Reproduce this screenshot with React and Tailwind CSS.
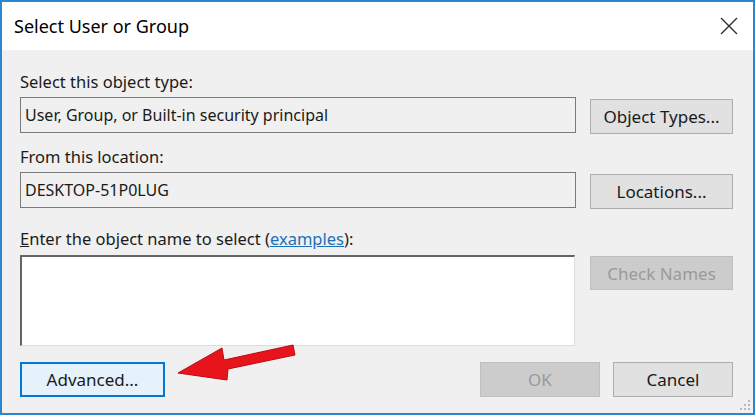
import React from "react";

const font = { fontFamily: '"Noto Sans", "Open Sans", sans-serif' };

const Button = ({ children, variant = "normal", className = "" }) => {
  const styles = {
    normal: "bg-[#e1e1e1] border-[#adadad] text-[#1a1a1a]",
    focused: "bg-[#e5f1fb] border-[#0078d7] border-2 text-[#1a1a1a]",
    disabled: "bg-[#cccccc] border-[#bfbfbf] text-[#9a9a9a]",
  };
  return (
    <div
      className={`flex items-center justify-center border text-[17px] leading-none ${styles[variant]} ${className}`}
    >
      {children}
    </div>
  );
};

const Arrow = () => (
  <svg
    className="absolute left-0 top-0 pointer-events-none"
    width="755"
    height="415"
    viewBox="0 0 755 415"
  >
    <polygon
      points="178,373 222,348 224,360 293,345 295,355 228,369 227,380"
      fill="#e8141c"
      stroke="#b80d12"
      strokeWidth="1"
      strokeLinejoin="round"
    />
  </svg>
);

export default function App() {
  return (
    <div className="relative w-[755px] h-[415px] overflow-hidden" style={font}>
      <div className="w-full h-full flex flex-col border-2 border-[#2a86d2] bg-[#f0f0f0]">
        {/* Title bar */}
        <div className="h-[48px] bg-white flex items-center justify-between pl-[12px] pr-[15px]">
          <span className="text-[18px] text-black pt-[1px]">Select User or Group</span>
          <svg width="18" height="18" viewBox="0 0 18 18">
            <path d="M1 1L17 17M17 1L1 17" stroke="#2b2b2b" strokeWidth="1.3" />
          </svg>
        </div>

        {/* Body */}
        <div className="flex-1 flex flex-col pl-[18px] pr-[20px] pt-[22px] text-[16px] text-[#1a1a1a]">
          <div className="h-[20px] leading-[20px] text-[16.5px]">Select this object type:</div>
          <div className="mt-[5px] flex gap-[14px]">
            <div className="flex-1 h-[36px] border border-[#7a7a7a] bg-[#f0f0f0] flex items-center pl-[4px]">
              User, Group, or Built-in security principal
            </div>
            <Button className="w-[143px] h-[35px] mt-[2px]">Object Types...</Button>
          </div>

          <div className="mt-[13px] h-[20px] leading-[20px] text-[16.5px]">From this location:</div>
          <div className="mt-[5px] flex gap-[14px]">
            <div className="flex-1 h-[36px] border border-[#7a7a7a] bg-[#f0f0f0] flex items-center pl-[4px]">
              DESKTOP-51P0LUG
            </div>
            <Button className="w-[143px] h-[35px] mt-[2px]">Locations...</Button>
          </div>

          <div className="mt-[20px] h-[20px] leading-[20px] text-[16.5px]">
            <span className="underline">E</span>nter the object name to select (
            <span className="text-[#1c6fb8] underline">examples</span>):
          </div>
          <div className="mt-[6px] flex gap-[15px]">
            <div className="flex-1 h-[91px] bg-white border-t-2 border-l-2 border-t-[#646464] border-l-[#646464] border-r border-b border-r-[#dcdcdc] border-b-[#dcdcdc]" />
            <Button variant="disabled" className="w-[143px] h-[34px] mt-[1px]">
              Check Names
            </Button>
          </div>

          <div className="mt-[16px] flex items-center">
            <Button variant="focused" className="w-[145px] h-[35px]">
              Advanced...
            </Button>
            <div className="flex-1" />
            <Button variant="disabled" className="w-[120px] h-[35px]">
              OK
            </Button>
            <Button className="w-[120px] h-[35px] ml-[13px] border-[#8a8a8a]">Cancel</Button>
          </div>
        </div>
      </div>

      {/* resize grip */}
      <svg className="absolute right-[4px] bottom-[4px]" width="12" height="12" viewBox="0 0 12 12">
        <rect x="9" y="1" width="2" height="2" fill="#b8b8b8" />
        <rect x="5" y="5" width="2" height="2" fill="#b8b8b8" />
        <rect x="9" y="5" width="2" height="2" fill="#b8b8b8" />
        <rect x="1" y="9" width="2" height="2" fill="#b8b8b8" />
        <rect x="5" y="9" width="2" height="2" fill="#b8b8b8" />
        <rect x="9" y="9" width="2" height="2" fill="#b8b8b8" />
      </svg>

      <Arrow />
    </div>
  );
}
